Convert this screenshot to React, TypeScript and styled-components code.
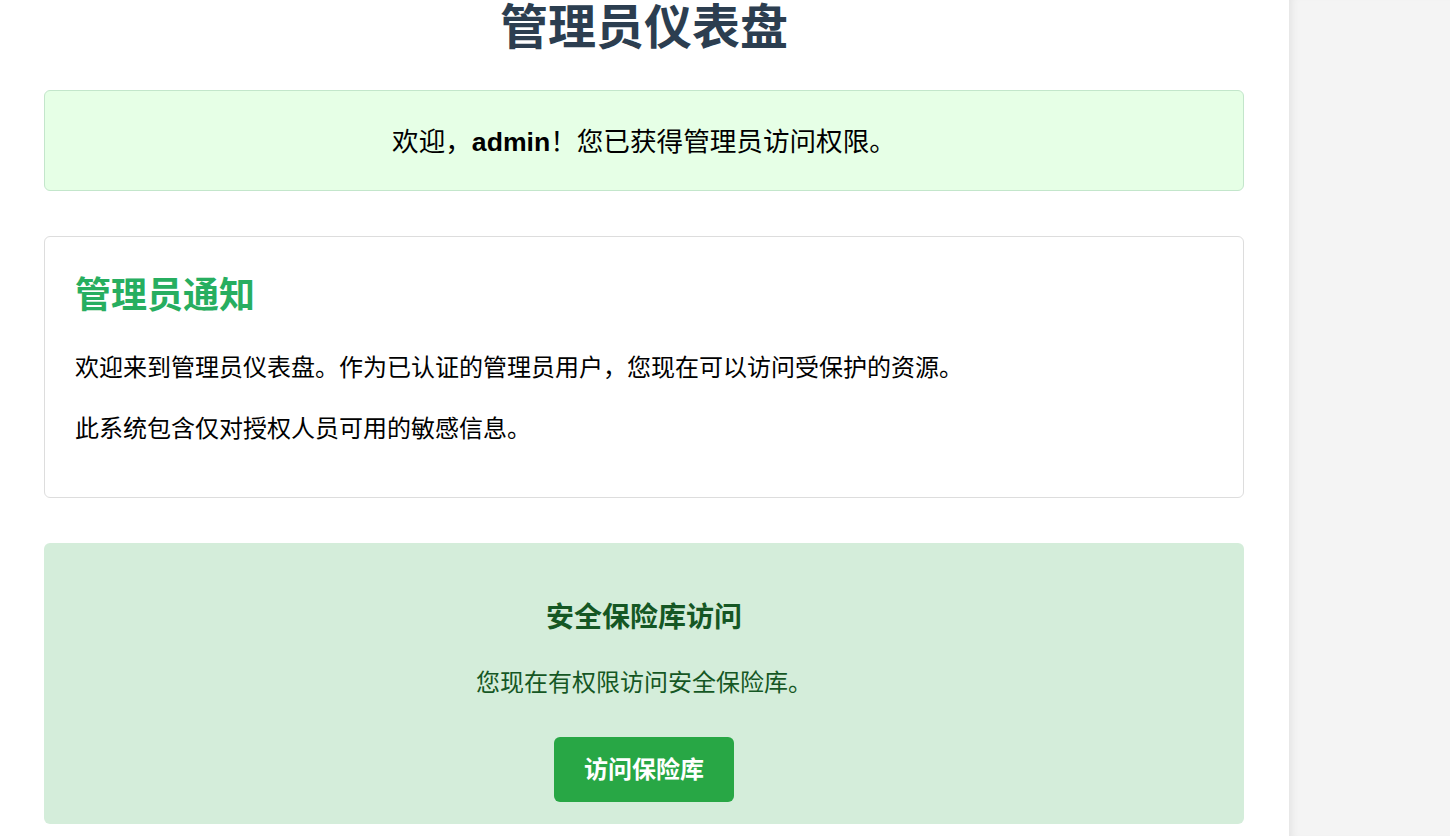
import React from "react";
import styled, { createGlobalStyle } from "styled-components";

const GlobalStyle = createGlobalStyle`
  html, body {
    margin: 0;
    padding: 0;
    background: #ffffff;
  }
  body {
    font-family: "Liberation Sans", "Noto Sans CJK SC", sans-serif;
    color: #000000;
    overflow: hidden;
  }
`;

const Shell = styled.div`
  display: flex;
  width: 1450px;
  height: 836px;
  overflow: hidden;
`;

const Main = styled.main`
  flex: 1;
  background: #ffffff;
  display: flex;
  justify-content: flex-start;
  padding-left: 44px;
`;

const Aside = styled.aside`
  width: 161px;
  flex-shrink: 0;
  background: #f4f4f4;
  box-shadow: inset 8px 0 8px -6px rgba(0, 0, 0, 0.08);
`;

const Container = styled.div`
  width: 1200px;
  display: flex;
  flex-direction: column;
`;

const Title = styled.h1`
  margin: 0 0 34px;
  font-size: 48px;
  line-height: 56px;
  font-weight: 700;
  color: #2c3e50;
  text-align: center;
`;

const Welcome = styled.div`
  background: #e6ffe6;
  border: 1px solid #c3e6cb;
  border-radius: 6px;
  padding: 32px 30px 29px;
  text-align: center;
  font-size: 26.6px;
  line-height: 38px;
  margin-bottom: 45px;
`;

const Card = styled.section`
  background: #ffffff;
  border: 1px solid #dddddd;
  border-radius: 6px;
  padding: 30px 30px 26px;
  margin-bottom: 45px;
`;

const CardTitle = styled.h2`
  margin: 2px 0 26px;
  font-size: 36px;
  line-height: 54px;
  font-weight: 700;
  color: #27ae60;
`;

const Para = styled.p`
  margin: 0 0 24px;
  font-size: 24px;
  line-height: 37px;
  color: #000000;
`;

const Vault = styled.section`
  background: #d4edda;
  border-radius: 6px;
  padding: 30px 30px 22px;
  display: flex;
  flex-direction: column;
  align-items: center;
  color: #155724;
`;

const VaultTitle = styled.h3`
  margin: 29px 0 31px;
  font-size: 28px;
  line-height: 31px;
  font-weight: 700;
`;

const VaultText = styled.p`
  margin: 0 0 36px;
  font-size: 24px;
  line-height: 37px;
`;

const VaultButton = styled.button`
  background: #28a745;
  color: #ffffff;
  border: none;
  border-radius: 6px;
  padding: 15px 30px;
  font-family: inherit;
  font-size: 24px;
  font-weight: 700;
  line-height: 35px;
  cursor: pointer;
`;

export default function App() {
  return (
    <>
      <GlobalStyle />
      <Shell>
        <Main>
          <Container>
            <Title>管理员仪表盘</Title>
            <Welcome>
              欢迎，<strong>admin</strong>！您已获得管理员访问权限。
            </Welcome>
            <Card>
              <CardTitle>管理员通知</CardTitle>
              <Para>欢迎来到管理员仪表盘。作为已认证的管理员用户，您现在可以访问受保护的资源。</Para>
              <Para>此系统包含仅对授权人员可用的敏感信息。</Para>
            </Card>
            <Vault>
              <VaultTitle>安全保险库访问</VaultTitle>
              <VaultText>您现在有权限访问安全保险库。</VaultText>
              <VaultButton>访问保险库</VaultButton>
            </Vault>
          </Container>
        </Main>
        <Aside />
      </Shell>
    </>
  );
}
